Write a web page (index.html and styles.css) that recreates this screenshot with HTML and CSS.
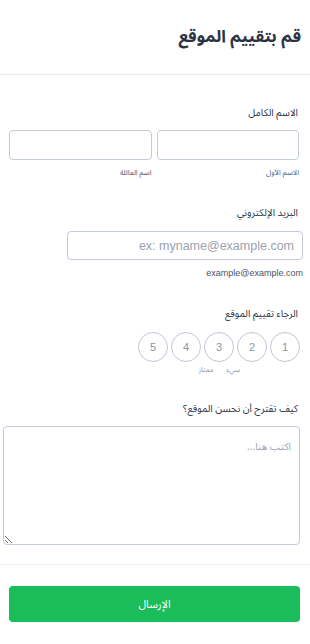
FILE: index.html
```html
<!DOCTYPE html>
<html lang="ar" dir="rtl">
<head>
<meta charset="utf-8">
<title>قم بتقييم الموقع</title>
<link rel="stylesheet" href="styles.css">
</head>
<body>
<header class="header">
  <h1 class="title">قم بتقييم الموقع</h1>
</header>
<form class="form">
  <div class="field field-name">
    <label class="label">الاسم الكامل</label>
    <div class="name-row">
      <div class="name-col">
        <input class="input" type="text">
        <span class="sublabel">الاسم الأول</span>
      </div>
      <div class="name-col">
        <input class="input" type="text">
        <span class="sublabel">اسم العائلة</span>
      </div>
    </div>
  </div>

  <div class="field field-email">
    <label class="label">البريد الإلكتروني</label>
    <input class="input email-input" type="email" placeholder="ex: myname@example.com">
    <span class="email-hint">example@example.com</span>
  </div>

  <div class="field field-rating">
    <label class="label">الرجاء تقييم الموقع</label>
    <div class="rating-row">
      <span class="circle">1</span>
      <span class="circle">2</span>
      <span class="circle">3</span>
      <span class="circle">4</span>
      <span class="circle">5</span>
    </div>
    <div class="rating-labels">
      <span class="rate-label">سيء</span>
      <span class="rate-label">ممتاز</span>
    </div>
  </div>

  <div class="field field-text">
    <label class="label">كيف تقترح أن نحسن الموقع؟</label>
    <textarea class="textarea" placeholder="اكتب هنا..."></textarea>
  </div>

  <div class="footer">
    <button class="submit" type="button">الإرسال</button>
  </div>
</form>
</body>
</html>
```

FILE: styles.css
```css
* {
  box-sizing: border-box;
}

html, body {
  margin: 0;
  padding: 0;
  background: #ffffff;
}

body {
  font-family: "Noto Sans Arabic", "Noto Naskh Arabic", "Noto Kufi Arabic", "Liberation Sans", "DejaVu Sans", Arial, sans-serif;
  color: #2c3345;
  width: 310px;
}

.header {
  height: 75px;
  border-bottom: 1px solid #e8eaef;
  display: flex;
  align-items: center;
  padding-right: 9px;
}

.title {
  margin: 0;
  font-size: 17px;
  font-weight: bold;
  line-height: 26px;
  color: #2c3345;
}

.form {
  margin: 0;
}

.field {
  display: flex;
  flex-direction: column;
  align-items: flex-start;
}

.label {
  font-size: 10px;
  line-height: 16px;
  color: #2c3345;
  padding-right: 12px;
}

.field-name {
  margin-top: 30px;
}

.name-row {
  display: flex;
  gap: 5px;
  margin-top: 9px;
  padding-right: 11px;
  padding-left: 9px;
  width: 100%;
}

.name-col {
  flex: 1;
  display: flex;
  flex-direction: column;
}

.input {
  display: block;
  height: 30px;
  border: 1px solid #c3cad8;
  border-radius: 4px;
  background: #fff;
  padding: 0 8px;
  font-family: "Liberation Sans", Arial, sans-serif;
  font-size: 12.5px;
  color: #2c3345;
  outline: none;
}

.name-col .input {
  width: 100%;
}

.input::placeholder {
  color: #9ba2b1;
}

.sublabel {
  margin-top: 7px;
  font-size: 7.5px;
  line-height: 12px;
  color: #57647e;
}

.field-email {
  margin-top: 26px;
}

.email-input {
  margin-top: 10px;
  margin-right: 7px;
  width: 236px;
  height: 29px;
}

.email-hint {
  margin-top: 7px;
  margin-right: 7px;
  font-family: "Liberation Sans", Arial, sans-serif;
  font-size: 9px;
  line-height: 12px;
  color: #4a5468;
}

.field-rating {
  margin-top: 27px;
}

.rating-row {
  display: flex;
  gap: 3px;
  margin-top: 10px;
  margin-right: 10px;
}

.circle {
  width: 30px;
  height: 30px;
  border: 1px solid #c0c6d3;
  border-radius: 50%;
  display: flex;
  align-items: center;
  justify-content: center;
  font-family: "Liberation Sans", Arial, sans-serif;
  font-size: 11px;
  color: #8a93a6;
}

.rating-labels {
  display: flex;
  gap: 13px;
  margin-top: 3px;
  margin-right: 70px;
}

.rate-label {
  font-size: 7px;
  line-height: 10px;
  color: #8a93a6;
}

.field-text {
  margin-top: 26px;
}

.textarea {
  display: block;
  margin-top: 9px;
  margin-right: 10px;
  width: 297px;
  height: 119px;
  border: 1px solid #c3cad8;
  border-radius: 4px;
  padding: 9px 8px;
  font-family: inherit;
  font-size: 10px;
  color: #2c3345;
  outline: none;
}

.textarea::placeholder {
  color: #9ba2b1;
}

.footer {
  margin-top: 19px;
  border-top: 1px solid #eceef3;
  padding: 21px 10px 0 10px;
}

.submit {
  display: block;
  width: 291px;
  height: 36px;
  border: none;
  border-radius: 4px;
  background: #1bbd5b;
  color: #ffffff;
  font-family: inherit;
  font-size: 11px;
  cursor: pointer;
}
```
